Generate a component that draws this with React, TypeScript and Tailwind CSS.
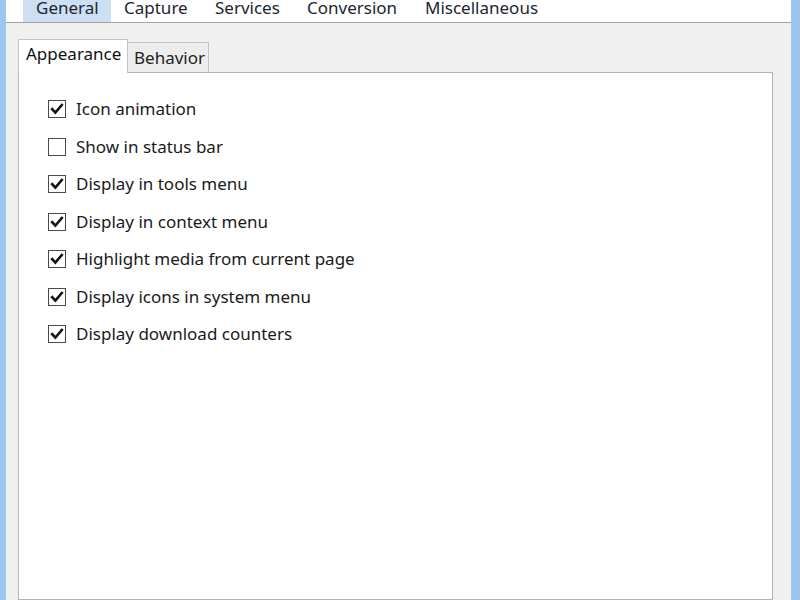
import React from 'react';

const topTabs = [
  { label: 'General', w: 'w-[88px]', active: true },
  { label: 'Capture', w: 'w-[91px]', active: false },
  { label: 'Services', w: 'w-[92px]', active: false },
  { label: 'Conversion', w: 'w-[118px]', active: false },
  { label: 'Miscellaneous', w: 'w-[130px]', active: false },
];

const options = [
  { label: 'Icon animation', checked: true },
  { label: 'Show in status bar', checked: false },
  { label: 'Display in tools menu', checked: true },
  { label: 'Display in context menu', checked: true },
  { label: 'Highlight media from current page', checked: true },
  { label: 'Display icons in system menu', checked: true },
  { label: 'Display download counters', checked: true },
];

function CheckBox({ checked }: { checked: boolean }) {
  return (
    <div className="w-[18px] h-[18px] border border-[#4a4a4a] bg-white flex items-center justify-center shrink-0">
      {checked && (
        <svg width="14" height="14" viewBox="0 0 14 14">
          <path d="M2.2 7.2 L5.4 10.6 L11.8 3" fill="none" stroke="#111" strokeWidth="2.6" strokeLinecap="square" />
        </svg>
      )}
    </div>
  );
}

export default function App() {
  return (
    <div
      className="w-[800px] h-[600px] overflow-hidden bg-[#9dc6ef] pl-[6px] pr-[9px] flex"
      style={{ fontFamily: '"Noto Sans", "Open Sans", sans-serif' }}
    >
      <div className="flex-1 flex flex-col bg-[#f0f0f0] min-w-0">
        {/* top tab strip */}
        <div className="h-[23px] bg-white border-b border-[#a3a3a3] flex pl-[17px] shrink-0">
          {topTabs.map((t) => (
            <div
              key={t.label}
              className={`${t.w} h-full pl-[13px] text-[17px] leading-[15px] text-[#1c2530] ${t.active ? 'bg-[#cddff3]' : ''}`}
            >
              {t.label}
            </div>
          ))}
        </div>

        {/* inner tabs */}
        <div className="pl-[12px] pr-[18px] pt-[16px] flex flex-col flex-1">
          <div className="flex items-end h-[33px] shrink-0">
            <div className="w-[110px] h-[34px] bg-white border border-b-0 border-[#c4c4c4] pl-[7px] text-[17px] leading-[28px] text-[#111] relative z-10 -mb-px">
              Appearance
            </div>
            <div className="w-[81px] h-[30px] bg-[#ededed] border border-l-0 border-b-0 border-[#c4c4c4] pl-[6px] text-[17px] leading-[30px] text-[#222]">
              Behavior
            </div>
          </div>
          <div className="flex-1 bg-white border border-[#b4b4b4] pt-[27px] pl-[29px] flex flex-col">
            {options.map((o) => (
              <div key={o.label} className="h-[37.5px] flex items-start gap-[10px]">
                <CheckBox checked={o.checked} />
                <span className="text-[17px] leading-[18px] text-[#1a1a1a]">{o.label}</span>
              </div>
            ))}
          </div>
        </div>
      </div>
    </div>
  );
}
